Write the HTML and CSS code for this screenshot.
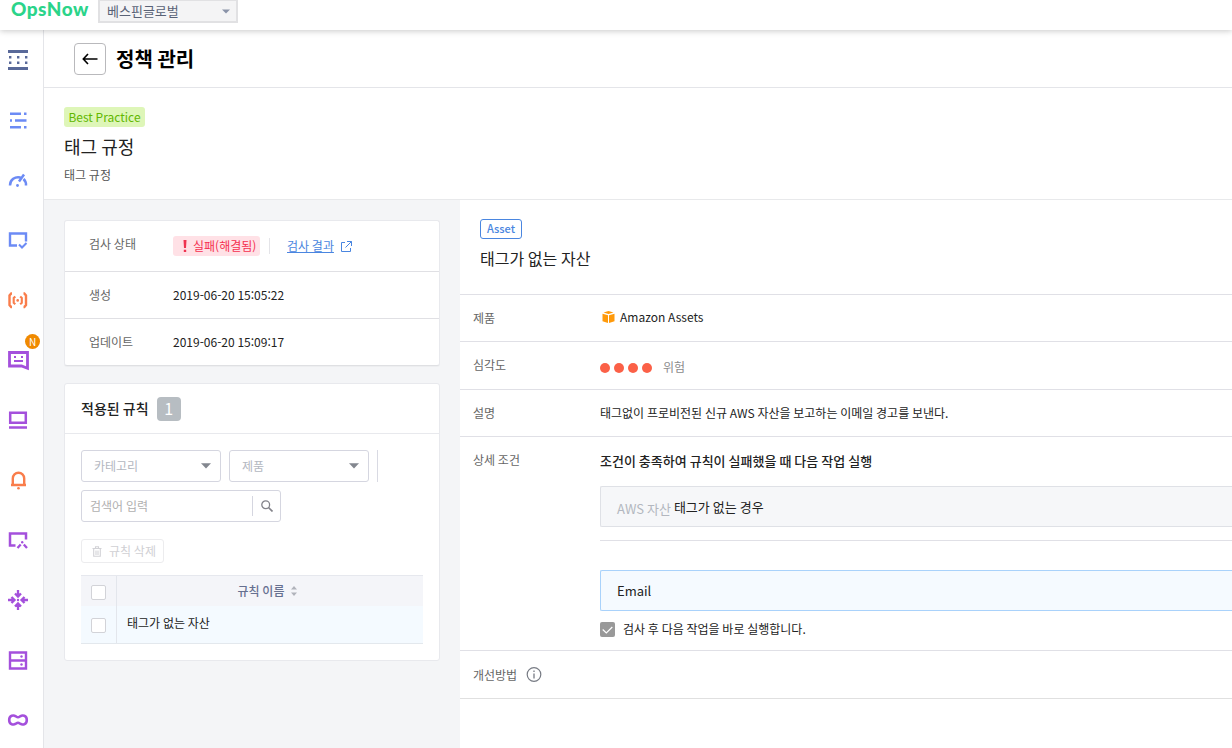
FILE: index.html
```html
<!DOCTYPE html>
<html lang="ko">
<head>
    <meta charset="UTF-8">
    <meta name="viewport" content="width=device-width, initial-scale=1.0">
    <title>정책 관리</title>
    <link rel="stylesheet" href="styles.css">
</head>
<body>
    <header class="topbar">
        <div class="logo">OpsNow</div>
        <div class="company-select">
            <span>베스핀글로벌</span>
            <svg width="8" height="5" viewBox="0 0 8 5"><path d="M0 0.5h8L4 4.5z" fill="#8a93a8"/></svg>
        </div>
    </header>

    <div class="layout">
        <nav class="sidebar">
            <a class="nav-item navy">
                <svg viewBox="0 0 20 20"><path d="M0 1.5h20M0 18.5h20" stroke-width="3"/><path d="M1 7.2h19M1 12.8h19" stroke-width="2.4" stroke-dasharray="2.4 5.6"/></svg>
            </a>
            <a class="nav-item blue">
                <svg viewBox="0 0 20 20"><path d="M2 3.8h11M16 3.8h2.500M2 10.500h2M7 10.500h11.500M2 17.200h11M16 17.200h2.500" stroke-width="2.500"/></svg>
            </a>
            <a class="nav-item blue">
                <svg viewBox="0 0 20 20"><path d="M2 15.500A8.200 8.200 0 0 1 12.500 7.500M15.500 9A8.200 8.200 0 0 1 18 15.500M11 11.500l5-7" stroke-width="2.500"/><circle cx="9.500" cy="15.500" r="1.400" class="fill"/></svg>
            </a>
            <a class="nav-item blue">
                <svg viewBox="0 0 20 20"><path d="M9 15.500H2V3.500h16v8" stroke-width="2.400"/><path d="M11 14.500l3 3 4.500-4.500" stroke-width="2"/></svg>
            </a>
            <a class="nav-item orange">
                <svg viewBox="0 0 20 20"><path d="M4 3.500H3.200l-1.700 2v9.500l1.700 2H4M15.500 3.500h.8l1.700 2v9.500l-1.700 2h-.8" stroke-width="2.400"/><path d="M7.300 6.500L5.700 8v4.800l1.600 1.400M12.200 6.500L13.800 8v4.800l-1.600 1.400" stroke-width="2.100"/><circle cx="9.700" cy="10.400" r="1.300" class="fill"/></svg>
            </a>
            <a class="nav-item purple">
                <svg viewBox="0 0 20 20"><path d="M1.500 2.500h18v15.800l-6-2.300h-12z" stroke-width="2.800"/><path d="M6 7h2M13 7h2M6 11h9" stroke-width="2"/></svg>
                <span class="nav-badge">N</span>
            </a>
            <a class="nav-item purple">
                <svg viewBox="0 0 20 20"><path d="M2.200 2.700h15.600v10H2.200zM1 17.500h18" stroke-width="2.500"/></svg>
            </a>
            <a class="nav-item orange">
                <svg viewBox="0 0 20 20"><path d="M3 15h15M4.800 15V8.500a5.700 5.700 0 0 1 11.400 0V15" stroke-width="2.400"/><circle cx="10.500" cy="18.300" r="1.300" class="fill"/></svg>
            </a>
            <a class="nav-item purple">
                <svg viewBox="0 0 20 20"><path d="M7.500 15.500H2V3.500h16v6" stroke-width="2.500"/><path d="M9.500 18l3.200-3.500M19 18l-3.200-3.500" stroke-width="2.300"/><circle cx="14.200" cy="12.300" r="1.200" class="fill"/></svg>
            </a>
            <a class="nav-item purple">
                <svg viewBox="0 0 20 20"><path d="M10 0v6M7 3.500l3 3 3-3M10 20v-6M7 16.500l3-3 3 3M0 10h6M3.500 7l3 3-3 3M20 10h-6M16.500 7l-3 3 3 3" stroke-width="2.300"/><circle cx="10" cy="10" r="1.200" class="fill"/></svg>
            </a>
            <a class="nav-item purple">
                <svg viewBox="0 0 20 20"><path d="M2 2.500h16v16H2zM2 10.500h16" stroke-width="2.400"/><circle cx="13.500" cy="6.500" r="1.200" class="fill"/><circle cx="13.500" cy="14.500" r="1.200" class="fill"/></svg>
            </a>
            <a class="nav-item purple">
                <svg viewBox="0 0 20 20"><path d="M7.800 6.300C5.800 5 1.200 5 1.200 10s4.600 5 6.600 3.700c1-.7 1.300-1 2.200-1s1.200.3 2.200 1c2 1.300 6.600 1.300 6.600-3.700s-4.600-5-6.600-3.700c-1 .7-1.300 1-2.200 1s-1.200-.3-2.200-1z" stroke-width="2.600"/></svg>
            </a>
        </nav>

        <main class="main">
            <div class="title-bar">
                <button class="back-button">
                    <svg width="16" height="12" viewBox="0 0 16 12"><path d="M15.500 6H1.500M6 1L1.300 6 6 11" fill="none" stroke="#000" stroke-width="1.600"/></svg>
                </button>
                <h1>정책 관리</h1>
            </div>

            <section class="summary">
                <span class="tag-green">Best Practice</span>
                <h2>태그 규정</h2>
                <p>태그 규정</p>
            </section>

            <div class="columns">
                <div class="left">
                    <div class="card status-card">
                        <div class="status-row first">
                            <span class="label">검사 상태</span>
                            <span class="status-value">
                                <span class="fail-badge">
                                    <svg width="4" height="12" viewBox="0 0 4 12"><path d="M.5 0h3L3 8H1zM.8 9.700h2.400V12H.8z" fill="#ef3350"/></svg>
                                    실패(해결됨)
                                </span>
                                <span class="status-line"></span>
                                <a class="link">검사 결과</a>
                                <svg class="link-icon" width="11" height="11" viewBox="0 0 11 11"><path d="M4 1.500H.5v9h9V7M6 .5h4.500V5M4.500 6.500l6-6" fill="none" stroke="#4a86e0"/></svg>
                            </span>
                        </div>
                        <div class="status-row">
                            <span class="label">생성</span>
                            <span>2019-06-20 15:05:22</span>
                        </div>
                        <div class="status-row">
                            <span class="label">업데이트</span>
                            <span>2019-06-20 15:09:17</span>
                        </div>
                    </div>

                    <div class="card rules-card">
                        <div class="rules-head">
                            <h3>적용된 규칙</h3>
                            <span class="count">1</span>
                        </div>
                        <div class="rules-body">
                            <div class="filters">
                                <div class="select"><span>카테고리</span><svg width="10" height="6" viewBox="0 0 10 6"><path d="M0 .3h10L5 5.500z" fill="#83878f"/></svg></div>
                                <div class="select"><span>제품</span><svg width="10" height="6" viewBox="0 0 10 6"><path d="M0 .3h10L5 5.500z" fill="#83878f"/></svg></div>
                                <span class="filter-line"></span>
                                <div class="search">
                                    <span>검색어 입력</span>
                                    <span class="search-button">
                                        <svg width="12" height="12" viewBox="0 0 12 12" fill="none" stroke="#83838a"><circle cx="4.700" cy="4.700" r="3.900" stroke-width="1.300"/><path d="M7.500 7.500l4 4" stroke-width="1.700"/></svg>
                                    </span>
                                </div>
                            </div>
                            <button class="delete-button">
                                <svg width="10" height="11" viewBox="0 0 10 11" fill="none" stroke="#d2d2d6"><path d="M.5 2.500h9M3.500 2.300V.7h3v1.600M1.700 2.800v7.500h6.600V2.800M4 4.500V9M6 4.500V9" stroke-width="1.100"/></svg>
                                <span>규칙 삭제</span>
                            </button>
                            <div class="rule-table">
                                <div class="rule-row rule-header">
                                    <span class="check-cell"><span class="checkbox"></span></span>
                                    <span class="name-cell">규칙 이름
                                        <svg width="6" height="10" viewBox="0 0 6 10"><path d="M0 3.500L3 0l3 3.500zM0 6.500h6L3 10z" fill="#b0b3bb"/></svg>
                                    </span>
                                </div>
                                <div class="rule-row">
                                    <span class="check-cell"><span class="checkbox"></span></span>
                                    <span class="name-cell">태그가 없는 자산</span>
                                </div>
                            </div>
                        </div>
                    </div>
                </div>

                <div class="detail">
                    <div class="detail-head">
                        <span class="tag-blue">Asset</span>
                        <h2>태그가 없는 자산</h2>
                    </div>
                    <div class="detail-row">
                        <span class="label">제품</span>
                        <div class="product">
                            <svg width="13" height="12" viewBox="0 0 13 12"><path d="M6.500 0l5 1.500-5 1.400-5-1.400zM0.500 2.700L6 4.200V12L0.500 10.200zM12.500 2.700L7 4.200V12l5.500-1.800z" fill="#ff9a0b"/></svg>
                            Amazon Assets
                        </div>
                    </div>
                    <div class="detail-row severity-row">
                        <span class="label">심각도</span>
                        <div class="severity"><i></i><i></i><i></i><i></i><span>위험</span></div>
                    </div>
                    <div class="detail-row">
                        <span class="label">설명</span>
                        <div>태그없이 프로비전된 신규 AWS 자산을 보고하는 이메일 경고를 보낸다.</div>
                    </div>
                    <div class="detail-row condition-row">
                        <span class="label">상세 조건</span>
                        <div class="condition">
                            <h4>조건이 충족하여 규칙이 실패했을 때 다음 작업 실행</h4>
                            <div class="box box-gray"><span class="muted">AWS 자산</span><span>태그가 없는 경우</span></div>
                            <div class="box-line"></div>
                            <div class="box box-blue">Email</div>
                            <div class="run-option">
                                <span class="checkbox checked"><svg width="11" height="8" viewBox="0 0 11 8"><path d="M.7 3.500L4.300 7l6-6" fill="none" stroke="#fff" stroke-width="1.200"/></svg></span>
                                <span class="run-text">검사 후 다음 작업을 바로 실행합니다.</span>
                            </div>
                        </div>
                    </div>
                    <div class="detail-row fix-row">
                        <span class="label">개선방법
                            <svg width="16" height="16" viewBox="0 0 16 16"><circle cx="8" cy="7.500" r="6.800" fill="none" stroke="#777b84" stroke-width="1.200"/><path d="M8 3.500v1.500M8 6.500v5" stroke="#777b84" stroke-width="1.300"/></svg>
                        </span>
                    </div>
                </div>
            </div>
        </main>
    </div>
</body>
</html>
```
FILE: styles.css
```css
* {
    box-sizing: border-box;
    word-spacing: -0.05em;
}
body {
    margin: 0;
    height: 748px;
    overflow: hidden;
    background: #fff;
    color: #222;
    font-family: 'Noto Sans CJK KR', 'Noto Sans', sans-serif;
    font-size: 12px;
    line-height: 18px;
}
h1, h2, h3, h4, p {
    margin: 0;
}
svg {
    display: block;
    flex: none;
}
button {
    font-family: inherit;
    padding: 0;
    background: #fff;
}

/* top bar */
.topbar {
    display: flex;
    align-items: flex-start;
    height: 30px;
    padding-left: 11px;
    background: #fff;
    box-shadow: 0 1px 6px rgba(0, 0, 0, 0.22);
    position: relative;
    z-index: 2;
}
.logo {
    width: 87px;
    color: #2bd48a;
    font-family: Lato, sans-serif;
    font-size: 19px;
    font-weight: 900;
    line-height: 18px;
    letter-spacing: 0.5px;
}
.company-select {
    display: flex;
    align-items: center;
    justify-content: space-between;
    width: 140px;
    height: 23px;
    padding: 0 6px 0 7px;
    border: 2px solid #e1e1e3;
    border-top: 1px solid #e1e1e3;
    background: #f4f4f5;
    color: #596276;
    font-size: 13px;
}

/* sidebar */
.layout {
    display: flex;
    height: 718px;
}
.sidebar {
    flex: none;
    width: 44px;
    border-right: 1px solid #e4e5e9;
}
.nav-item {
    display: flex;
    align-items: center;
    height: 60px;
    padding-left: 8px;
    position: relative;
}
.nav-item svg {
    width: 20px;
    height: 20px;
    fill: none;
    stroke: currentColor;
    overflow: visible;
}
.nav-item .fill {
    fill: currentColor;
    stroke: none;
}
.navy { color: #596999; }
.blue { color: #6c8bf5; }
.orange { color: #f97d4b; }
.purple { color: #a450dc; }
.nav-badge {
    position: absolute;
    left: 25px;
    top: 4px;
    width: 15px;
    height: 15px;
    border-radius: 50%;
    background: #f08a00;
    color: #fff;
    font-size: 10px;
    line-height: 15px;
    text-align: center;
}

/* page header */
.main {
    flex: 1;
    min-width: 0;
    display: flex;
    flex-direction: column;
}
.title-bar {
    display: flex;
    align-items: center;
    gap: 10px;
    height: 58px;
    padding-left: 30px;
    border-bottom: 1px solid #e4e5e9;
}
.back-button {
    display: flex;
    align-items: center;
    justify-content: center;
    width: 32px;
    height: 32px;
    border: 1px solid #b9b9bc;
    border-radius: 4px;
}
.title-bar h1 {
    color: #000;
    font-size: 20px;
    font-weight: 700;
    line-height: 30px;
}
.summary {
    height: 112px;
    padding: 19px 20px 0;
    border-bottom: 1px solid #e8e9eb;
}
.tag-green {
    display: block;
    width: 81px;
    height: 20px;
    border-radius: 3px;
    background: #def6b8;
    color: #62b800;
    line-height: 20px;
    text-align: center;
}
.summary h2 {
    margin-top: 5px;
    font-size: 18px;
    font-weight: 400;
    line-height: 28px;
}
.summary p {
    margin-top: 6px;
    color: #555;
}

/* left column */
.columns {
    flex: 1;
    display: flex;
}
.left {
    flex: none;
    width: 416px;
    padding: 20px;
    background: #f4f5f7;
}
.card {
    border: 1px solid #e8e9ed;
    border-radius: 3px;
    background: #fff;
}
.label {
    color: #666;
}
.status-card {
    height: 146px;
    border-bottom-color: #dfe0e3;
    box-shadow: 0 1px 1px rgba(0, 0, 0, 0.03);
}
.status-row {
    display: grid;
    grid-template-columns: 84px 1fr;
    align-items: center;
    height: 47px;
    padding-left: 24px;
}
.status-row.first {
    height: 50px;
}
.status-row.first .label {
    padding-bottom: 4px;
}
.status-row + .status-row {
    border-top: 1px solid #e0e0e4;
}
.status-value {
    display: flex;
    align-items: center;
}
.fail-badge {
    display: flex;
    align-items: center;
    gap: 6px;
    width: 87px;
    height: 20px;
    padding-left: 10px;
    border-radius: 3px;
    background: #ffe1e6;
    color: #f5304f;
    white-space: nowrap;
}
.status-line {
    width: 1px;
    height: 16px;
    margin: 0 17px 0 9px;
    background: #e4e4e8;
}
.link {
    color: #4a86e0;
    text-decoration: underline;
}
.link-icon {
    margin-left: 7px;
}

.rules-card {
    height: 278px;
    margin-top: 17px;
}
.rules-head {
    display: flex;
    align-items: center;
    gap: 8px;
    height: 50px;
    padding-left: 16px;
    border-bottom: 1px solid #e8e9ed;
}
.rules-head h3 {
    padding-bottom: 2px;
    font-size: 14px;
    font-weight: 500;
}
.count {
    width: 24px;
    height: 24px;
    border-radius: 4px;
    background: #b7bdc2;
    color: #fff;
    font-size: 16px;
    line-height: 23px;
    text-align: center;
}
.rules-body {
    padding: 16px;
}
.filters {
    display: flex;
    flex-wrap: wrap;
    gap: 8px;
}
.select, .search {
    display: flex;
    align-items: center;
    justify-content: space-between;
    height: 32px;
    border: 1px solid #d5d6e0;
    border-radius: 3px;
    color: #b3b7bf;
}
.select {
    width: 140px;
    padding: 0 9px 0 12px;
}
.filter-line {
    width: 1px;
    height: 32px;
    background: #d9dae3;
}
.search {
    width: 200px;
    padding-left: 8px;
    color: #b0b0b0;
}
.search-button {
    height: 20px;
    padding: 4px 7px 0 8px;
    border-left: 1px solid #d5d6e0;
}
.delete-button {
    display: flex;
    align-items: center;
    gap: 7px;
    width: 83px;
    height: 24px;
    margin: 17px 0 12px;
    padding-left: 10px;
    border: 1px solid #ececee;
    border-radius: 3px;
    color: #d0d0d4;
    font-size: 12px;
}
.delete-button span {
    padding-bottom: 1px;
}
.rule-table {
    width: 342px;
    border-top: 1px solid #e6e8ee;
    border-bottom: 1px solid #e3e8ed;
}
.rule-row {
    display: grid;
    grid-template-columns: 36px 1fr;
    height: 37px;
    background: #f4faff;
}
.rule-header {
    height: 30px;
    background: #f4f5f9;
    color: #667090;
    font-weight: 500;
}
.check-cell {
    display: flex;
    align-items: center;
    justify-content: center;
    padding-top: 2px;
    border-right: 1px solid #e3e6ec;
}
.checkbox {
    width: 15px;
    height: 15px;
    border: 1px solid #d2d3d8;
    border-radius: 2px;
    background: #fff;
}
.rule-header .check-cell {
    padding-top: 3px;
}
.name-cell {
    display: flex;
    align-items: center;
    padding: 0 0 3px 10px;
}
.rule-header .name-cell {
    justify-content: center;
    gap: 7px;
    padding: 0 5px 0 0;
}

/* right column */
.detail {
    flex: 1;
    min-width: 0;
}
.detail-head {
    height: 94px;
    padding: 19px 20px 0;
}
.tag-blue {
    display: block;
    width: 42px;
    height: 20px;
    border: 1px solid #4a86e0;
    border-radius: 3px;
    color: #4a86e0;
    font-size: 11px;
    font-weight: 500;
    line-height: 17px;
    text-align: center;
}
.detail-head h2 {
    margin-top: 7px;
    font-size: 16px;
    font-weight: 400;
    line-height: 24px;
}
.detail-row {
    display: grid;
    grid-template-columns: 127px 1fr;
    align-items: center;
    height: 47px;
    padding-left: 13px;
    border-top: 1px solid #e0e0e6;
}
.product {
    display: flex;
    align-items: center;
    gap: 5px;
    padding: 0 0 2px 2px;
}
.severity-row {
    height: 48px;
}
.severity-row .label {
    padding-bottom: 1px;
}
.severity {
    display: flex;
    align-items: center;
    gap: 4px;
    padding-top: 4px;
    color: #8b8b8b;
}
.severity i {
    width: 10px;
    height: 10px;
    border-radius: 50%;
    background: #fb6047;
}
.severity span {
    margin-left: 7px;
    padding-bottom: 1px;
}
.condition-row {
    align-items: start;
    height: 214px;
    padding-top: 14px;
}
.condition h4 {
    padding-top: 1px;
    font-size: 13px;
    font-weight: 500;
    line-height: 18px;
}
.box {
    display: flex;
    align-items: center;
    gap: 3px;
    height: 41px;
    padding-left: 16px;
    border: 1px solid #dfe1e6;
    border-right: 0;
    border-radius: 2px 0 0 2px;
    font-size: 13px;
}
.box-gray {
    margin-top: 16px;
    background: #f6f7f9;
}
.box .muted {
    padding-top: 4px;
    color: #b3b7bf;
}
.box-line {
    height: 1px;
    margin: 13px 0 29px;
    background: #e0e0e6;
}
.box-blue {
    border-color: #a9d2fb;
    background: #f5faff;
}
.run-option {
    display: flex;
    align-items: center;
    gap: 8px;
    margin-top: 9px;
}
.run-text {
    padding-bottom: 1px;
}
.checked {
    display: flex;
    align-items: center;
    justify-content: center;
    border: 0;
    background: #999;
}
.fix-row {
    height: 49px;
    border-bottom: 1px solid #e0e0e0;
}
.fix-row .label {
    display: flex;
    align-items: center;
    gap: 9px;
}
```
